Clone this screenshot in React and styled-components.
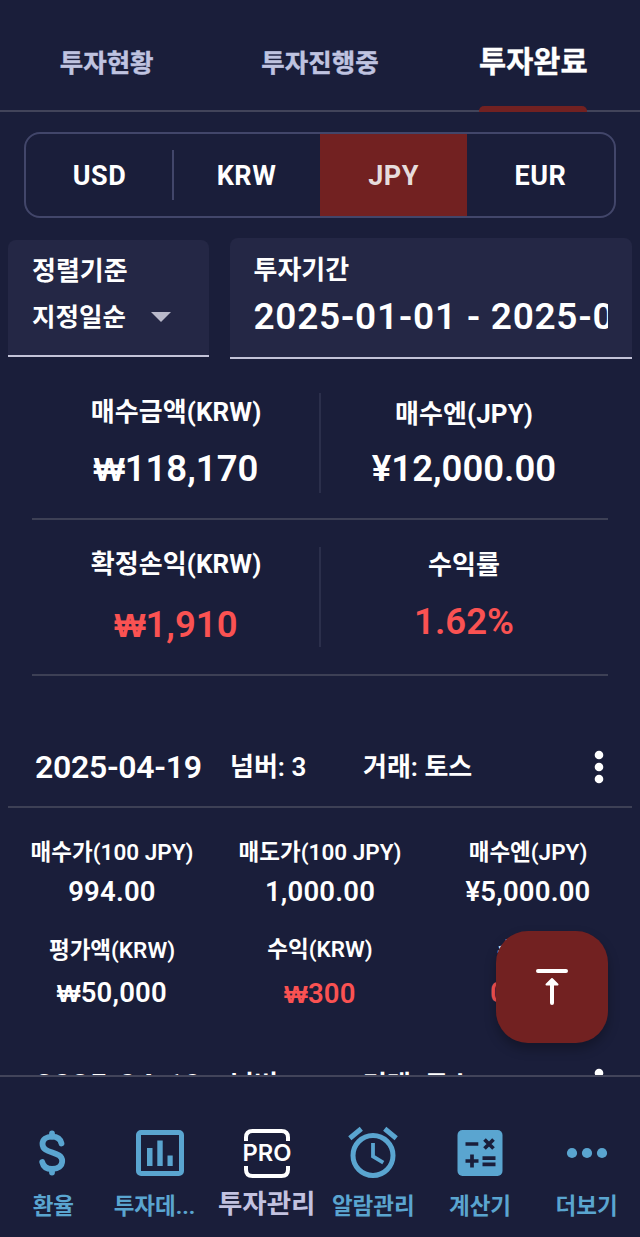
import React, { useState } from 'react';
import styled, { createGlobalStyle } from 'styled-components';

const GlobalStyle = createGlobalStyle`
  * {
    box-sizing: border-box;
  }

  body {
    margin: 0;
    background: #1a1e3a;
    font-family: Roboto, 'Noto Sans CJK KR', sans-serif;
    color: #fff;
  }

  button {
    padding: 0;
    border: 0;
    background: none;
    color: inherit;
    font-family: inherit;
  }
`;

const Screen = styled.div`
  width: 640px;
  height: 1237px;
  display: flex;
  flex-direction: column;
  overflow: hidden;
  background: #1a1e3a;
`;

const Text = styled.span`
  display: block;
  white-space: nowrap;
  font-size: ${(p) => p.$size}px;
  line-height: ${(p) => p.$line}px;
  font-weight: ${(p) => p.$weight || 700};
  letter-spacing: ${(p) => p.$spacing || 0}px;
  color: ${(p) => p.$color || 'inherit'};
`;

const Won = styled.span`
  font-family: 'Liberation Sans', sans-serif;
  font-size: 0.9em;
  font-weight: 700;
  line-height: 0;
`;

const Tabs = styled.div`
  flex: none;
  height: 112px;
  display: grid;
  grid-template-columns: repeat(3, 1fr);
  border-bottom: 2px solid #42445a;
`;

const Tab = styled.button`
  height: 112px;
  display: flex;
  flex-direction: column;
  align-items: center;
  justify-content: space-between;
  padding-top: ${(p) => (p.$active ? 42 : 43)}px;
  color: ${(p) => (p.$active ? '#fff' : '#bfc3e0')};
  -webkit-text-stroke: 0.4px currentColor;
`;

const TabIndicator = styled.span`
  width: 108px;
  height: 6px;
  border-radius: 5px 5px 0 0;
  background: #722121;
`;

const Currencies = styled.div`
  flex: none;
  height: 86px;
  margin: 20px 24px 0;
  display: flex;
  border: 2px solid #42466a;
  border-radius: 16px;
  overflow: hidden;
`;

const Currency = styled.button`
  flex: 1;
  display: flex;
  align-items: center;
  justify-content: center;
  padding-top: 1px;
  background: ${(p) => (p.$active ? '#722121' : 'transparent')};
  color: ${(p) => (p.$active ? '#e6dcdc' : '#fff')};
`;

const CurrencyDivider = styled.div`
  width: 2px;
  height: 50px;
  margin: 16px -1px;
  background: #42466a;
`;

const Filters = styled.div`
  flex: none;
  display: flex;
  align-items: flex-start;
  justify-content: space-between;
  padding: 20px 8px 0;
`;

const Field = styled.div`
  width: ${(p) => p.$width}px;
  height: ${(p) => p.$height}px;
  margin-top: ${(p) => p.$top || 0}px;
  padding: 15px 24px 0;
  border-bottom: 2px solid #c3c3d8;
  border-radius: 8px 8px 0 0;
  background: #242745;
`;

const FieldValue = styled.div`
  display: flex;
  align-items: center;
  gap: 25px;
  margin-top: ${(p) => p.$top}px;
  overflow: hidden;
`;

const Summary = styled.div`
  flex: none;
  margin: 13px 32px 0;
`;

const SummaryRow = styled.div`
  height: ${(p) => p.$height}px;
  display: flex;
  border-bottom: 2px solid #3d4055;
`;

const SummaryCell = styled.div`
  flex: 1;
  display: flex;
  flex-direction: column;
  align-items: center;
  padding-top: ${(p) => p.$top}px;
  gap: ${(p) => p.$gap}px;
`;

const SummaryDivider = styled.div`
  width: 2px;
  height: 100px;
  margin: ${(p) => p.$top}px -1px 0;
  background: #2b2f4b;
`;

const List = styled.div`
  flex: 1;
  min-height: 0;
  padding: 52px 8px 0;
  overflow: hidden;
`;

const Record = styled.div`
  height: 318px;
`;

const RecordHeader = styled.div`
  height: 80px;
  display: grid;
  grid-template-columns: 195px 133px 1fr auto;
  align-items: center;
  padding: 0 28px 0 27px;
  border-bottom: 2px solid #3d4055;
`;

const RecordGrid = styled.div`
  display: grid;
  grid-template-columns: repeat(3, 208px);
`;

const RecordCell = styled.div`
  height: 98px;
  display: flex;
  flex-direction: column;
  align-items: center;
  padding-top: ${(p) => p.$top}px;
  gap: ${(p) => p.$gap}px;
`;

const MenuButton = styled.button`
  width: 10px;
  height: 34px;
  display: flex;
`;

const ScrollTop = styled.button`
  position: absolute;
  left: 496px;
  top: 931px;
  width: 112px;
  height: 112px;
  display: flex;
  align-items: center;
  justify-content: center;
  border-radius: 32px;
  background: #722121;
  box-shadow: 0 6px 12px rgba(0, 0, 0, 0.28);
`;

const Nav = styled.nav`
  flex: none;
  height: 162px;
  display: grid;
  grid-template-columns: repeat(6, 1fr);
  border-top: 2px solid #42445a;
`;

const NavItem = styled.button`
  min-width: 0;
  display: flex;
  flex-direction: column;
  align-items: center;
  padding-top: 46px;
  color: ${(p) => (p.$active ? '#c3c2e0' : '#5aa5d0')};

  svg {
    flex: none;
    margin-bottom: ${(p) => (p.$active ? 6 : 8)}px;
  }
`;

const NavLabel = styled(Text)`
  padding-right: ${(p) => (p.$clipped ? 11 : 0)}px;
`;

const DollarIcon = () => (
  <svg width="60" height="60" viewBox="1 0 60 60" fill="none" stroke="currentColor" strokeWidth="5.800" strokeLinecap="round">
    <path d="M39.500 20.500C38.500 16 35 13.700 30 13.700c-5.500 0-9.500 2.800-9.500 7.300 0 10.500 19.700 6.500 19.700 17 0 5-4.400 8-10.200 8-5.200 0-8.800-2.600-9.800-7" />
    <path d="M30 10.500v3M30 46v3.500" />
  </svg>
);

const ChartIcon = () => (
  <svg width="60" height="60" viewBox="0 0 60 60" fill="currentColor">
    <rect x="8.500" y="9.500" width="43" height="41" rx="2.500" fill="none" stroke="currentColor" strokeWidth="5" />
    <path d="M17 25h5.500v18H17zM27.300 17.500h5.400V43h-5.400zM37.500 32.500h5.200V43h-5.200z" />
  </svg>
);

const ProIcon = () => (
  <svg width="60" height="60" viewBox="0 0 60 60" fill="none" stroke="#fff" strokeWidth="4">
    <path d="M9 18v-3.500Q9 8 15.500 8h29Q51 8 51 14.500V18M9 43v3.500Q9 53 15.500 53h29Q51 53 51 46.500V43" />
    <text x="5.500" y="38" textLength="49" lengthAdjust="spacingAndGlyphs" fill="#fff" stroke="none" fontFamily="Inter" fontWeight="600" fontSize="23.500">PRO</text>
  </svg>
);

const AlarmIcon = () => (
  <svg width="60" height="60" viewBox="0 0 60 60" fill="none" stroke="currentColor" strokeWidth="5">
    <circle cx="30" cy="32.500" r="20" />
    <path d="M30 20v13.500l10.300 6.200" strokeWidth="3.800" />
    <path d="M6.800 15.300 18.300 5.800M53.200 15.300 41.700 5.800" />
  </svg>
);

const CalculatorIcon = () => (
  <svg width="60" height="60" viewBox="0 0 60 60">
    <rect x="7.500" y="7" width="45" height="46" rx="5" fill="currentColor" />
    <path d="M15.500 21h12.800M34.500 16.500l9 9M43.500 16.500l-9 9M22 31.500v13M15.500 38h13M32.500 35.200h13M32.500 41.300h13" stroke="#1a1e3a" strokeWidth="3.700" />
  </svg>
);

const MoreIcon = () => (
  <svg width="60" height="60" viewBox="0 0 60 60" fill="currentColor">
    <circle cx="15" cy="30" r="5.100" />
    <circle cx="30" cy="30" r="5.100" />
    <circle cx="45" cy="30" r="5.100" />
  </svg>
);

const ToTopIcon = () => (
  <svg width="40" height="44" viewBox="0 0 40 44" fill="none" stroke="#fff" strokeWidth="4" strokeLinecap="round">
    <path d="M6 6h28M20 18v20" />
    <path d="M20 14l5.500 5.500h-11z" fill="#fff" strokeWidth="2" strokeLinejoin="round" />
  </svg>
);

const tabs = ['투자현황', '투자진행중', '투자완료'];

const currencies = ['USD', 'KRW', 'JPY', 'EUR'];

const summary = [
  {
    height: 148,
    dividerTop: 21,
    cells: [
      { label: '매수금액(KRW)', value: '₩118,170', top: 25, gap: 23 },
      { label: '매수엔(JPY)', value: '¥12,000.00', top: 27, gap: 21 },
    ],
  },
  {
    height: 156,
    dividerTop: 27,
    cells: [
      { label: '확정손익(KRW)', value: '₩1,910', top: 29, gap: 27, color: '#fa5252' },
      { label: '수익률', value: '1.62%', top: 30, gap: 23, color: '#fa5252' },
    ],
  },
];

const recordCells = [
  { label: '매수가(100 JPY)', value: '994.00', top: 29, gap: 10 },
  { label: '매도가(100 JPY)', value: '1,000.00', top: 29, gap: 10 },
  { label: '매수엔(JPY)', value: '¥5,000.00', top: 29, gap: 10 },
  { label: '평가액(KRW)', value: '₩50,000', top: 29, gap: 13 },
  { label: '수익(KRW)', value: '₩300', top: 28, gap: 15, color: '#fa5252' },
  { label: '수익률', value: '0.60%', top: 29, gap: 13, color: '#fa5252' },
];

const records = [
  { date: '2025-04-19', number: 3, broker: '토스' },
  { date: '2025-04-19', number: 2, broker: '토스' },
];

const navItems = [
  { label: '환율', icon: DollarIcon },
  { label: '투자데...', icon: ChartIcon, clipped: true },
  { label: '투자관리', icon: ProIcon },
  { label: '알람관리', icon: AlarmIcon },
  { label: '계산기', icon: CalculatorIcon },
  { label: '더보기', icon: MoreIcon },
];

const Amount = ({ value, size, line, color, spacing }) => (
  <Text $size={size} $line={line} $weight={600} $spacing={spacing} $color={color}>
    {value.startsWith('₩') ? <><Won>₩</Won>{value.slice(1)}</> : value}
  </Text>
);

const RecordItem = ({ record }) => (
  <Record>
    <RecordHeader>
      <Text $size={32} $line={40} $weight={600} $spacing={-0.3}>{record.date}</Text>
      <Text $size={26} $line={40} $weight={600}>넘버: {record.number}</Text>
      <Text $size={26} $line={40} $weight={600}>거래: {record.broker}</Text>
      <MenuButton aria-label="menu">
        <svg width="10" height="34" viewBox="0 0 10 34" fill="#fff">
          <circle cx="5" cy="5" r="4.300" />
          <circle cx="5" cy="17" r="4.300" />
          <circle cx="5" cy="29" r="4.300" />
        </svg>
      </MenuButton>
    </RecordHeader>
    <RecordGrid>
      {recordCells.map((cell) => (
        <RecordCell key={cell.label} $top={cell.top} $gap={cell.gap}>
          <Text $size={22.5} $line={30} $weight={600}>{cell.label}</Text>
          <Amount value={cell.value} size={27.5} line={30} color={cell.color} spacing={0.2} />
        </RecordCell>
      ))}
    </RecordGrid>
  </Record>
);

const App = () => {
  const [tab, setTab] = useState('투자완료');
  const [currency, setCurrency] = useState('JPY');
  const [page, setPage] = useState('투자관리');

  return (
    <>
      <GlobalStyle />
      <Screen>
        <Tabs>
          {tabs.map((label) => (
            <Tab key={label} $active={label === tab} onClick={() => setTab(label)}>
              <Text $size={label === tab ? 29.5 : 25.5} $line={40}>{label}</Text>
              {label === tab && <TabIndicator />}
            </Tab>
          ))}
        </Tabs>

        <Currencies>
          {currencies.map((code, index) => (
            <React.Fragment key={code}>
              {index === 1 && <CurrencyDivider />}
              <Currency $active={code === currency} onClick={() => setCurrency(code)}>
                <Text $size={27} $line={32} $spacing={0.5}>{code}</Text>
              </Currency>
            </React.Fragment>
          ))}
        </Currencies>

        <Filters>
          <Field $width={201} $height={117} $top={2}>
            <Text $size={26} $line={32}>정렬기준</Text>
            <FieldValue $top={13}>
              <Text $size={25.5} $line={34}>지정일순</Text>
              <svg width="20" height="10" viewBox="0 0 20 10" fill="#b9b9ca">
                <path d="M0 0h20L10 10z" />
              </svg>
            </FieldValue>
          </Field>
          <Field $width={402.5} $height={121}>
            <Text $size={26} $line={34}>투자기간</Text>
            <FieldValue $top={10}>
              <Text $size={37} $line={40} $weight={600} $spacing={0.7}>2025-01-01 - 2025-04-30</Text>
            </FieldValue>
          </Field>
        </Filters>

        <Summary>
          {summary.map((row) => (
            <SummaryRow key={row.height} $height={row.height}>
              {row.cells.map((cell, index) => (
                <React.Fragment key={cell.label}>
                  {index > 0 && <SummaryDivider $top={row.dividerTop} />}
                  <SummaryCell $top={cell.top} $gap={cell.gap}>
                    <Text $size={26} $line={30} $spacing={0.1}>{cell.label}</Text>
                    <Amount value={cell.value} size={36.5} line={38} color={cell.color} spacing={0} />
                  </SummaryCell>
                </React.Fragment>
              ))}
            </SummaryRow>
          ))}
        </Summary>

        <List>
          {records.map((record) => (
            <RecordItem key={record.number} record={record} />
          ))}
        </List>

        <Nav>
          {navItems.map(({ label, icon: Icon, clipped }) => (
            <NavItem key={label} $active={label === page} onClick={() => setPage(label)}>
              <Icon />
              <NavLabel $size={label === page ? 26.5 : 22.5} $line={30} $clipped={clipped}>{label}</NavLabel>
            </NavItem>
          ))}
        </Nav>

        <ScrollTop aria-label="top">
          <ToTopIcon />
        </ScrollTop>
      </Screen>
    </>
  );
};

export default App;
